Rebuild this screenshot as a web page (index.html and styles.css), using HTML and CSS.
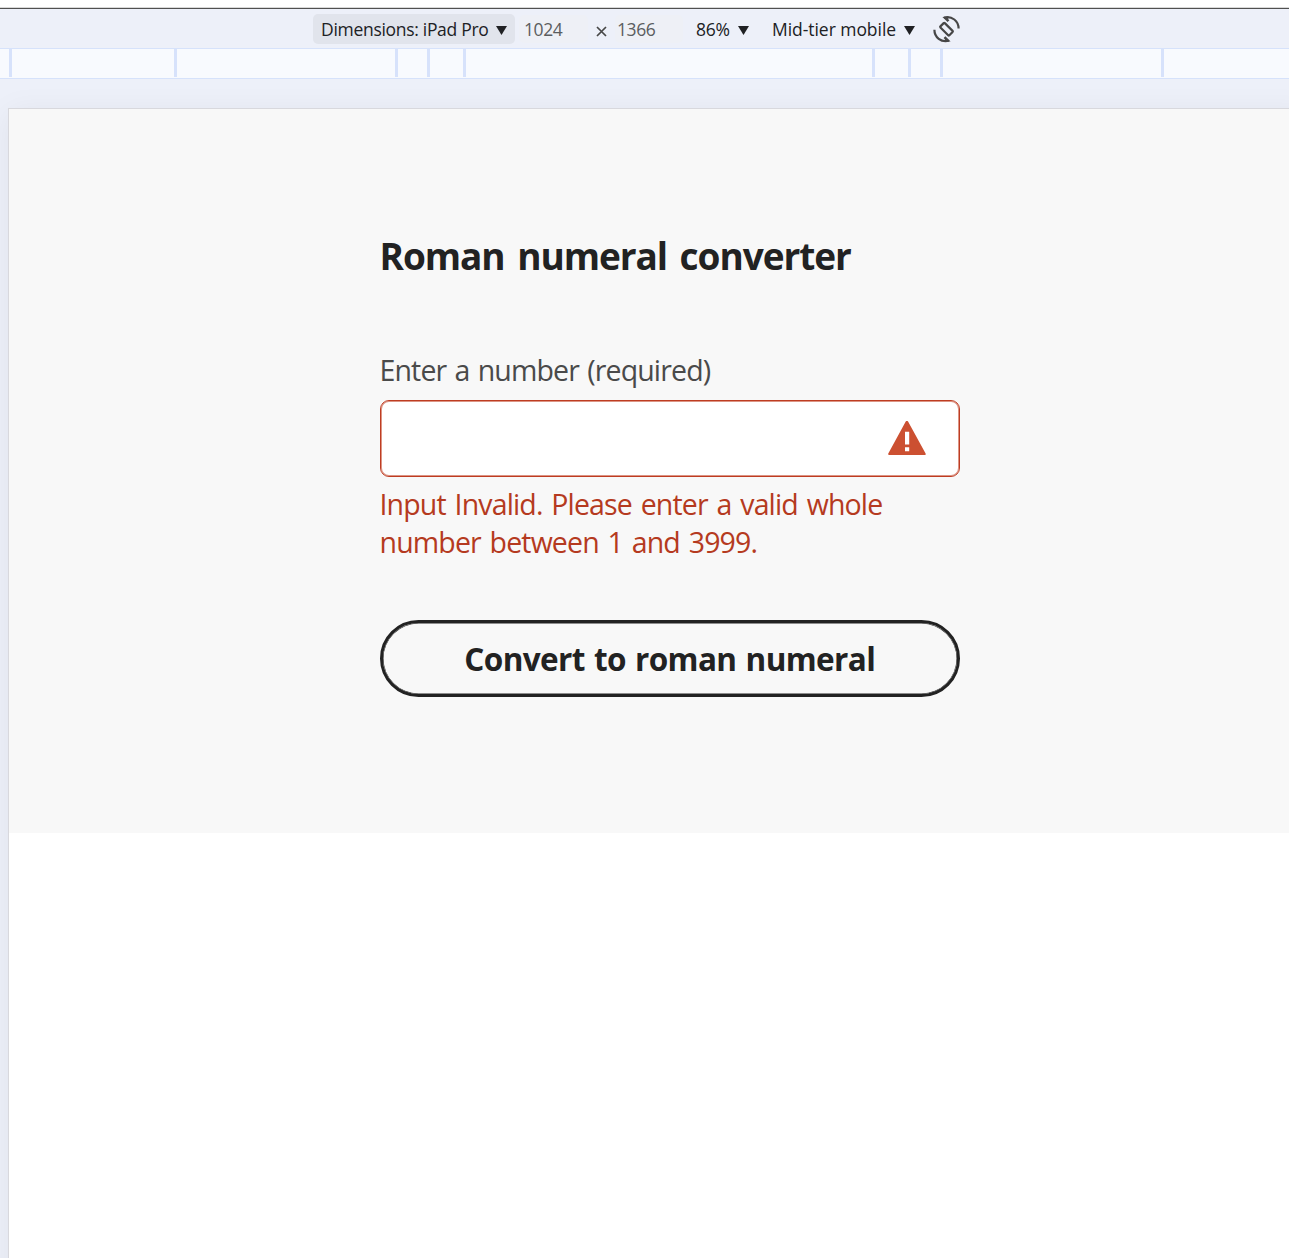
FILE: index.html
```html
<!DOCTYPE html>
<html lang="en">
<head>
<meta charset="utf-8">
<title>Roman numeral converter</title>
<link rel="stylesheet" href="styles.css">
</head>
<body>
<div class="window-edge"></div>
<header class="toolbar">
  <div class="device"><span class="device-name">Dimensions: iPad Pro</span><svg class="arrow" viewBox="0 0 11 9"><path d="M0 0h11L5.5 9z"/></svg></div>
  <div class="size size-width">1024</div>
  <svg class="times" viewBox="0 0 11 11"><path d="M1 1l9 9M10 1l-9 9"/></svg>
  <div class="size size-height">1366</div>
  <div class="choice zoom"><span class="zoom-text">86%</span><svg class="arrow" viewBox="0 0 11 9"><path d="M0 0h11L5.5 9z"/></svg></div>
  <div class="choice tier"><span class="tier-text">Mid-tier mobile</span><svg class="arrow" viewBox="0 0 11 9"><path d="M0 0h11L5.5 9z"/></svg></div>
  <svg class="rotate" viewBox="0 0 27 27"><rect x="10.4" y="6.9" width="6.2" height="12.6" rx=".8" transform="rotate(-45 13.5 13.2)"/><path d="M11 1.6C19-.4 25.6 5 25.6 12.6M16 24.8C8 26.8 1.4 21.4 1.4 13.8"/><path class="tip" d="M9.4.9L16 .8l-1 2.2 1.4 1.3-1.8 1.8zM17.6 25.5l-6.6.1 1-2.2-1.4-1.3 1.8-1.8z"/></svg>
</header>
<div class="ruler"><i class="m1"></i><i class="m2"></i><i class="m3"></i><i class="m4"></i><i class="m5"></i><i class="m6"></i><i class="m7"></i><i class="m8"></i><i class="m9"></i></div>
<div class="stage">
  <main class="viewport">
    <form class="converter">
      <h1 class="title">Roman numeral converter</h1>
      <label class="label" for="number">Enter a number (required)</label>
      <div class="field">
        <input class="input" id="number" type="text">
        <svg class="warning" viewBox="0 0 38 34"><path fill="#cc5031" d="M17.6.8a1.4 1.4 0 0 1 2.6 0L37.6 32.6Q38 34 36.6 34H1.2Q-.2 34 .3 32.6z"/><path fill="#fff" d="M17 10.8h4.2v12.8H17zM17 26.3h4.2v4H17z"/></svg>
      </div>
      <p class="error">Input Invalid. Please enter a valid whole<br>number between 1 and 3999.</p>
      <button class="convert" type="button">Convert to roman numeral</button>
    </form>
  </main>
</div>
</body>
</html>
```
FILE: styles.css
```css
* { box-sizing: border-box; }
body {
  margin: 0;
  height: 1258px;
  overflow: hidden;
  background: #fff;
  color: #202124;
  font-family: "Open Sans", "Noto Sans", sans-serif;
}
.window-edge { height: 9px; border-bottom: 1px solid #505050; box-shadow: inset 0 -1px #d8d8d8; }
.toolbar {
  display: flex;
  align-items: center;
  height: 40px;
  padding-left: 313px;
  background: #edf0f9;
  border-bottom: 1px solid #d6e2fb;
  font-size: 17.5px;
  line-height: 30px;
  white-space: nowrap;
}
.device {
  display: flex;
  align-items: center;
  justify-content: space-between;
  width: 202px;
  height: 30px;
  padding: 0 8px 0 8px;
  border-radius: 5px;
  background: #e1e4ec;
}
.device-name { letter-spacing: -0.3px; }
.arrow { width: 11px; height: 9px; margin-top: 3px; fill: #202124; flex: none; }
.size { height: 28px; line-height: 28px; border-radius: 5px; background: #eef0f6; color: #5b5d60; letter-spacing: -0.4px; }
.size-width { width: 69px; margin-left: 4px; padding-left: 5px; }
.times { width: 11px; height: 11px; margin: 6px 8px 0 8px; fill: none; stroke: #474747; stroke-width: 1.7; }
.size-height { width: 68px; padding-left: 2px; }
.choice { display: flex; align-items: center; justify-content: space-between; }
.zoom { width: 53px; margin-left: 13px; }
.tier { width: 143px; margin-left: 23px; }
.zoom-text { letter-spacing: -0.2px; }
.tier-text { letter-spacing: -0.05px; }
.rotate { width: 27px; height: 27px; margin: 1px 0 0 18px; fill: none; stroke: #474747; stroke-width: 2.2; }
.rotate .tip { fill: #474747; stroke: none; }
.ruler { display: flex; height: 30px; background: #f8fafe; border-bottom: 1px solid #d6e2fb; }
.ruler i { width: 3px; height: 28px; flex: none; background: #d7e2fb; }
.m1 { margin-left: 9px; }
.m2 { margin-left: 162px; }
.m3 { margin-left: 218px; }
.m4 { margin-left: 29px; }
.m5 { margin-left: 33px; }
.m6 { margin-left: 406px; }
.m7 { margin-left: 33px; }
.m8 { margin-left: 29px; }
.m9 { margin-left: 218px; }
.stage { height: 1179px; padding: 29px 0 0 8px; background: #edf0f9; overflow: hidden; }
.viewport {
  width: 1300px;
  height: 1200px;
  border: 1px solid #d8d8dd;
  background: #fff;
  box-shadow: 0 4px 30px rgba(0, 0, 0, .06);
}
.converter { height: 724px; padding: 118px 0 0 370.5px; background: #f8f8f8; }
.title {
  height: 58px;
  margin: 0;
  font-size: 37px;
  line-height: 58px;
  font-weight: 700;
  letter-spacing: -1.05px;
  word-spacing: 4px;
  color: #222;
}
.label {
  display: block;
  height: 40px;
  margin-top: 65px;
  font-size: 28.5px;
  line-height: 40px;
  letter-spacing: -0.85px;
  word-spacing: 1.6px;
  color: #4a4a4a;
}
.field {
  display: flex;
  align-items: center;
  width: 580.5px;
  height: 77px;
  margin-top: 10px;
  padding: 0 33px 2px 0;
  border: 1px solid #be3c22;
  box-shadow: inset 0 0 0 1px #dc9484;
  border-radius: 9px;
  background: #fff;
}
.input { flex: 1; min-width: 0; height: 60px; border: 0; background: transparent; outline: 0; }
.warning { width: 38px; height: 34px; }
.error {
  height: 76px;
  margin: 8px 0 0;
  font-size: 28.5px;
  line-height: 38px;
  letter-spacing: -0.85px;
  word-spacing: 2.2px;
  color: #b53a20;
}
.convert {
  display: block;
  width: 580.5px;
  height: 77px;
  margin-top: 59px;
  padding: 0;
  border: 3px solid #222;
  box-shadow: inset 0 0 0 .5px #222;
  border-radius: 39px;
  background: transparent;
  color: #222;
  font: 700 31.5px/68px "Open Sans", "Noto Sans", sans-serif;
  letter-spacing: -0.6px;
  word-spacing: 1.5px;
}
```
